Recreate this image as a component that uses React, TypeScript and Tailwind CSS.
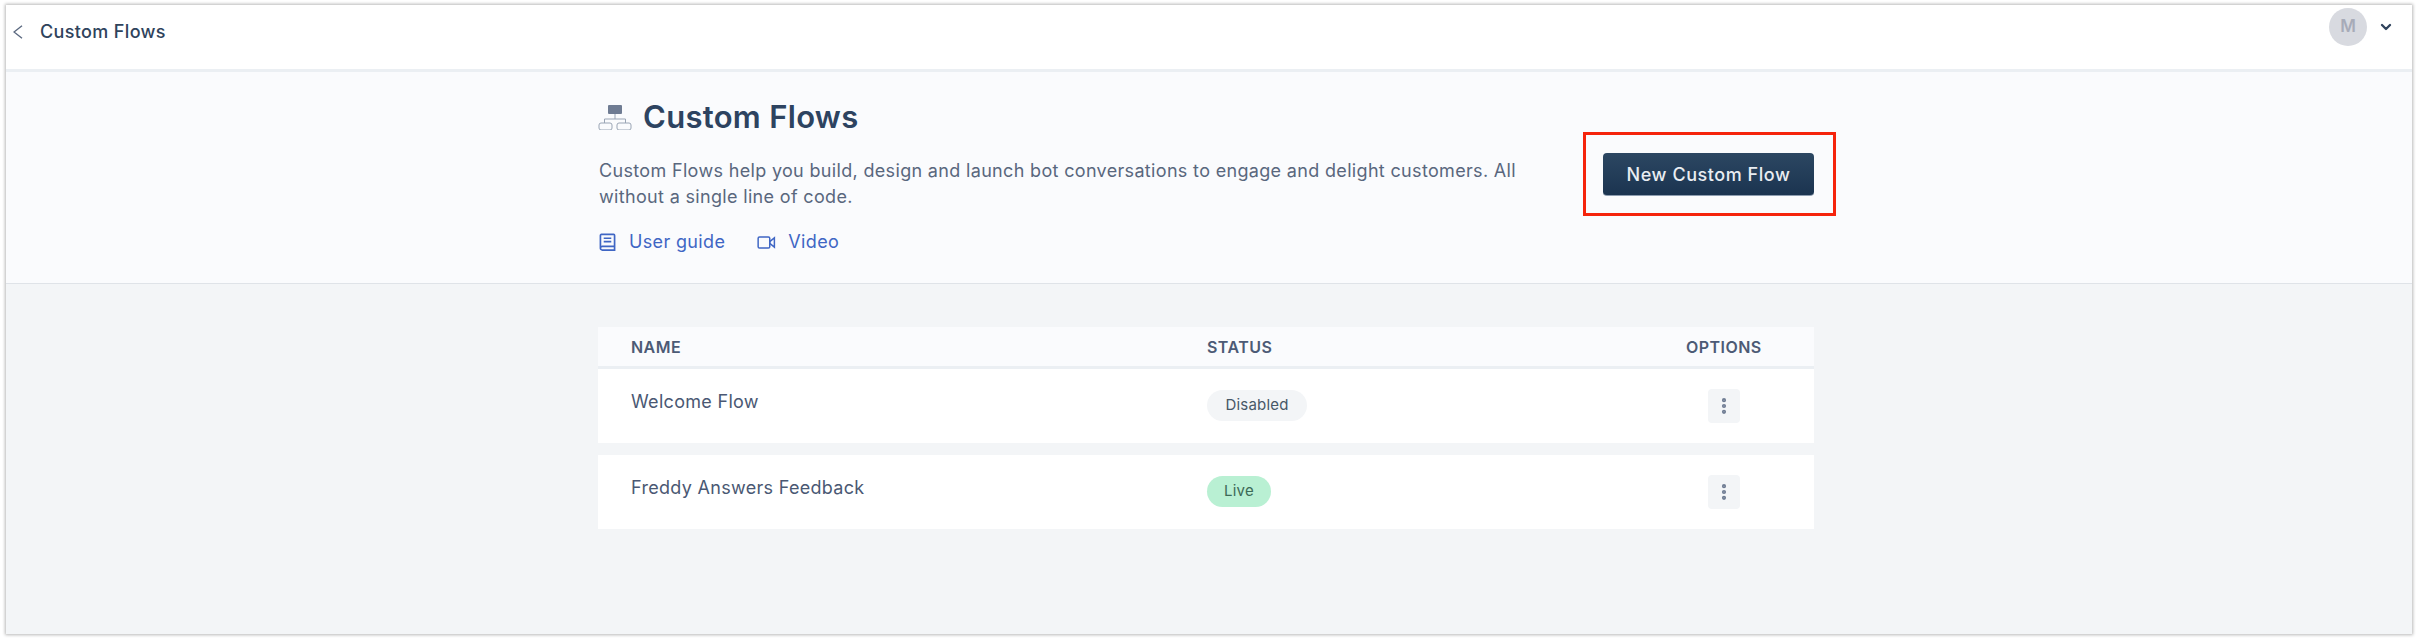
import { ChevronDown, MoreVertical } from 'lucide-react'

const FLOWS = [
  { name: 'Welcome Flow', status: 'Disabled', badge: 'bg-[#f3f5f7] text-[#475867] w-[100px]' },
  { name: 'Freddy Answers Feedback', status: 'Live', badge: 'bg-[#b9f0d3] text-[#3d6a57] w-[64px]' },
]

function BackIcon() {
  return (
    <svg viewBox="0 0 10 14" className="h-[14px] w-[10px]" fill="none" stroke="#5b6980" strokeWidth="1.4">
      <path d="M9 .7L1 7l8 6.3" />
    </svg>
  )
}

function FlowsIcon() {
  return (
    <svg viewBox="0 0 34 26" className="h-[26px] w-[34px]" fill="none">
      <rect x="10" y="1" width="14" height="9" rx="1" fill="#6f7c93" />
      <path d="M17 10v5M6.5 19v-4h21v4" stroke="#9aa5b5" strokeWidth="1" />
      <rect x="1" y="19" width="13" height="7" rx="2" stroke="#9aa5b5" strokeWidth="1" />
      <rect x="19" y="19" width="14" height="7" rx="2" stroke="#9aa5b5" strokeWidth="1" />
    </svg>
  )
}

function GuideIcon() {
  return (
    <svg viewBox="0 0 18 20" className="h-[19px] w-[17px]" fill="none" stroke="#3f66c4" strokeWidth="1.8">
      <path d="M1.5 16V2.5a1 1 0 0 1 1-1h13a1 1 0 0 1 1 1v15.5h-13a2 2 0 0 1-2-2zm0 0a2 2 0 0 1 2-2h13" />
      <path d="M5 5.5h8M5 9h8" />
    </svg>
  )
}

function VideoIcon() {
  return (
    <svg viewBox="0 0 20 14" className="h-[13px] w-[19px]" fill="none" stroke="#3f66c4" strokeWidth="1.6">
      <rect x="1" y="1" width="12.5" height="12" rx="1.5" />
      <path d="M13.5 6l5-4v10l-5-4z" />
    </svg>
  )
}

export default function App() {
  return (
    <div className="h-[641px] w-[2419px] bg-white pt-[5px] pl-[6px] font-['Inter',sans-serif]">
      <div className="flex h-[629px] w-[2406px] flex-col overflow-hidden bg-[#f3f5f7] shadow-[0_0_3px_1px_rgba(0,0,0,0.28)]">
        {/* Top bar */}
        <header className="flex h-[67px] shrink-0 items-start justify-between border-b-[3px] border-[#ebeff3] bg-white">
          <div className="flex items-center pt-[15px] pl-[7px]">
            <BackIcon />
            <span className="ml-[17px] text-[18px] leading-[24px] font-medium tracking-[0.35px] text-[#2f435c]">Custom Flows</span>
          </div>
          <div className="flex items-center pt-[3px] pr-[18px]">
            <div className="flex h-[38px] w-[38px] items-center justify-center rounded-full bg-[#d8dae0] text-[17px] font-semibold text-[#a7abb8]">
              M
            </div>
            <ChevronDown className="ml-[11px] h-[16px] w-[16px] text-[#2f435c]" strokeWidth={3.5} />
          </div>
        </header>

        {/* Intro */}
        <section className="h-[212px] shrink-0 border-b border-[#dfe3e8] bg-[#fafbfd]">
          <div className="relative ml-[592px] w-[1216px]">
            <div className="flex items-center pt-[26px]">
              <FlowsIcon />
              <h1 className="ml-[11px] text-[31px] leading-[38px] font-semibold tracking-[0.3px] text-[#2d4360]">Custom Flows</h1>
            </div>
            <p className="mt-[22px] ml-[1px] w-[930px] text-[18px] leading-[26px] tracking-[0.33px] text-[#59677d]">
              Custom Flows help you build, design and launch bot conversations to engage and delight customers. All without a single line of code.
            </p>
            <div className="mt-[20px] ml-[1px] flex items-center text-[18px] leading-[24px] tracking-[0.35px] text-[#3f66c4]">
              <GuideIcon />
              <span className="ml-[13px]">User guide</span>
              <span className="ml-[32px]"><VideoIcon /></span>
              <span className="ml-[12px]">Video</span>
            </div>
            <button className="absolute top-[81px] left-[1005px] h-[43px] w-[211px] rounded-[4px] border-b border-[#8d9db0] bg-gradient-to-b from-[#2c4762] to-[#1b3450] text-[18px] font-medium tracking-[0.55px] text-[#e9edf2]">
              New Custom Flow
            </button>
            {/* Annotation */}
            <div className="absolute top-[60px] left-[985px] h-[84px] w-[253px] border-[3px] border-[#f5240c]" />
          </div>
        </section>

        {/* Table */}
        <main className="ml-[592px] w-[1216px] pt-[43px]">
          <div className="flex h-[42px] items-center border-b-[3px] border-[#ebeff3] bg-[#fafbfd] text-[16px] font-semibold tracking-[0.45px] text-[#4c5a75]">
            <div className="w-[609px] pl-[33px]">NAME</div>
            <div className="flex-1">STATUS</div>
            <div className="w-[128px]">OPTIONS</div>
          </div>
          {FLOWS.map((flow) => (
            <div key={flow.name} className="mb-[12px] flex h-[74px] items-center bg-white">
              <div className="w-[609px] self-start pt-[21px] pl-[33px] text-[18px] leading-[24px] tracking-[0.3px] text-[#4a5873]">{flow.name}</div>
              <div className="flex-1">
                <span className={`flex h-[31px] -translate-y-[1px] items-center justify-center rounded-full text-[15px] tracking-[0.2px] ${flow.badge}`}>
                  {flow.status}
                </span>
              </div>
              <div className="w-[128px] pl-[22px]">
                <button className="flex h-[34px] w-[32px] items-center justify-center rounded-[4px] bg-[#f3f5f7] text-[#6f7c93]">
                  <MoreVertical className="h-[20px] w-[20px]" strokeWidth={3} />
                </button>
              </div>
            </div>
          ))}
        </main>
      </div>
    </div>
  )
}
